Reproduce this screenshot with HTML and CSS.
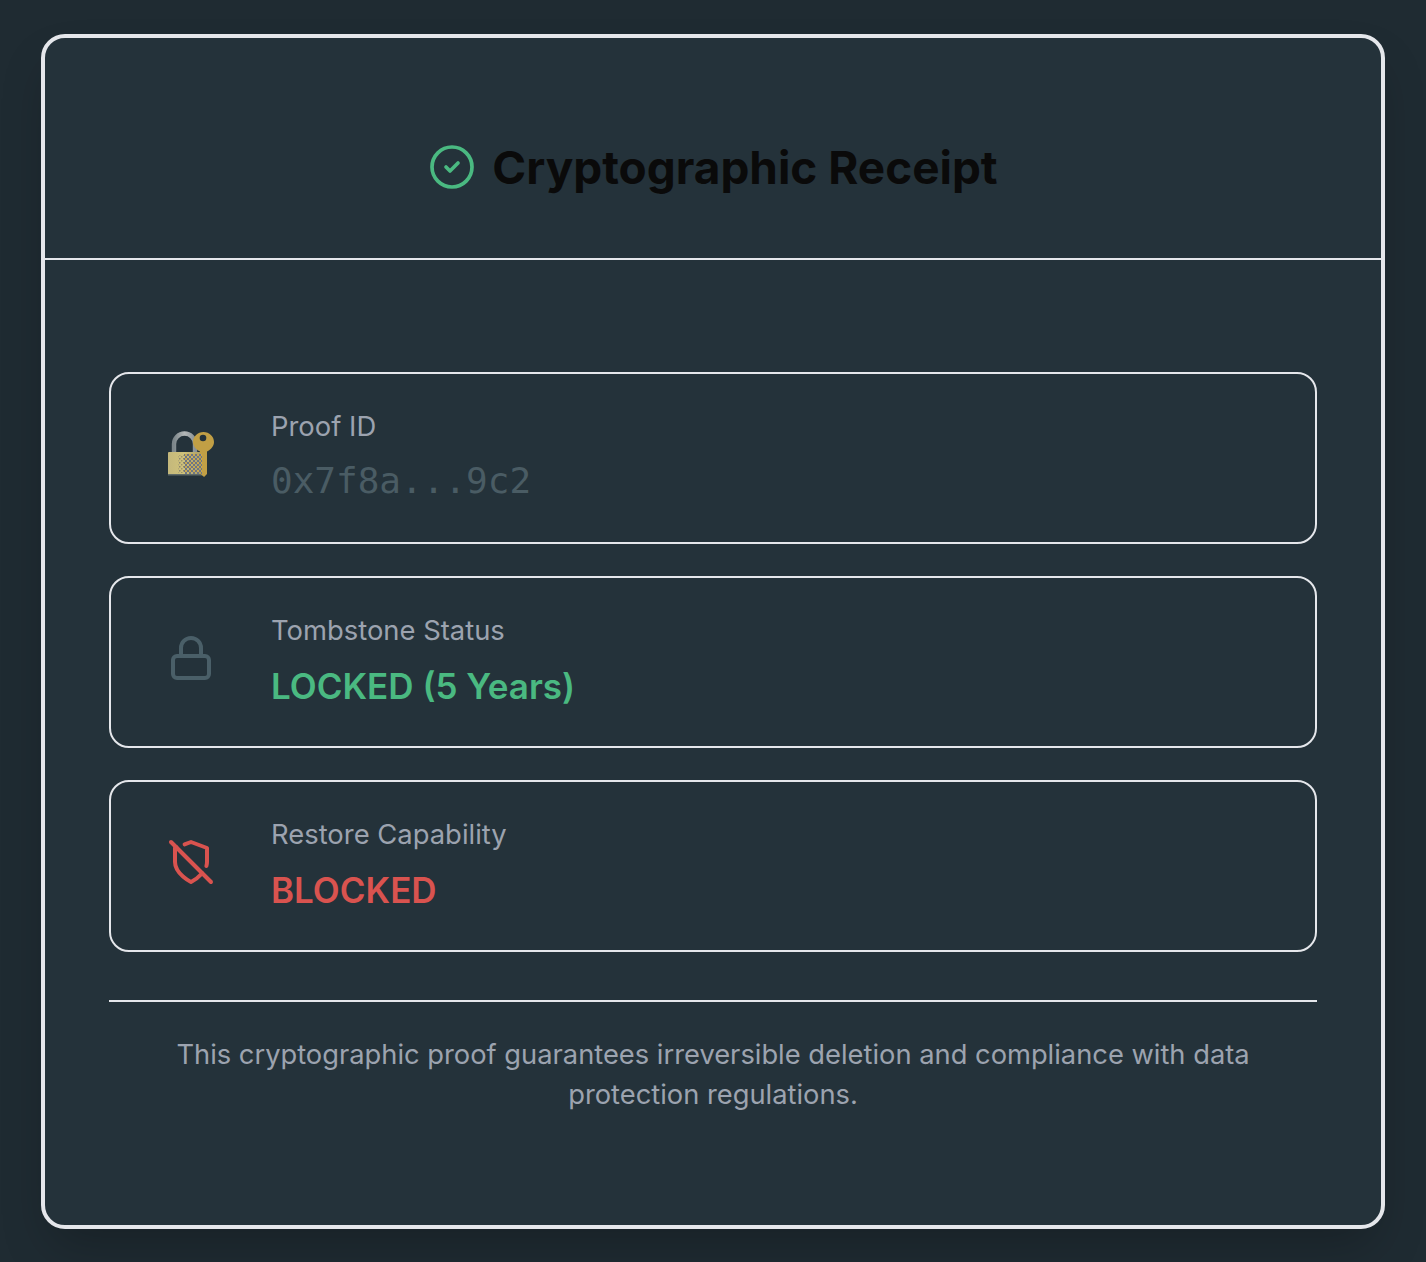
FILE: index.html
```html
<!DOCTYPE html>
<html lang="en">
<head>
    <meta charset="UTF-8">
    <meta name="viewport" content="width=device-width, initial-scale=1.0">
    <title>Cryptographic Receipt</title>
    <link rel="stylesheet" href="styles.css">
</head>
<body>
    <div class="card">
        <div class="card-header">
            <svg class="check-icon" viewBox="0 0 24 24" fill="none" stroke="#4ab981" stroke-width="1.85" stroke-linecap="round" stroke-linejoin="round">
                <circle cx="12" cy="12" r="10"/>
                <path d="m9 12 2 2 4-4"/>
            </svg>
            <h1>Cryptographic Receipt</h1>
        </div>
        <div class="card-body">
            <div class="rows">
                <div class="row">
                    <div class="row-icon">
                        <svg class="emoji" viewBox="0 0 48 48">
                            <defs>
                                <linearGradient id="brass" x1="0" x2="1" y1="0" y2="0">
                                    <stop offset="0" stop-color="#c4b87c"/>
                                    <stop offset="0.45" stop-color="#cfc27a"/>
                                    <stop offset="1" stop-color="#a89a62"/>
                                </linearGradient>
                                <linearGradient id="steel" x1="0" x2="1" y1="0" y2="0">
                                    <stop offset="0" stop-color="#7c868a"/>
                                    <stop offset="0.5" stop-color="#b4b8b8"/>
                                    <stop offset="1" stop-color="#8a9296"/>
                                </linearGradient>
                                <pattern id="dither" width="4" height="4" patternUnits="userSpaceOnUse">
                                    <rect width="2" height="2" fill="#6f7684"/>
                                    <rect x="2" y="2" width="2" height="2" fill="#6f7684"/>
                                    <rect x="2" width="2" height="2" fill="#c9a94f"/>
                                </pattern>
                                <pattern id="sparse" width="4" height="4" patternUnits="userSpaceOnUse">
                                    <rect width="1.5" height="1.5" fill="#8b8672"/>
                                    <rect x="2" y="2" width="1.5" height="1.5" fill="#9a9270"/>
                                </pattern>
                            </defs>
                            <path d="M7 23v-9a10.500 10.500 0 0 1 21 0v9" fill="none" stroke="url(#steel)" stroke-width="4.400"/>
                            <rect x="1" y="22" width="35" height="23" rx="1" fill="url(#brass)"/>
                            <rect x="1" y="44" width="35" height="1.500" fill="#5e6a68"/>
                            <path d="M36.500 2C42.300 2 47 6.500 47 12c0 4-3 7.500-7 9.500V44l-3 3-1-1-3-2.500V21.500c-4-2-7-5.500-7-9.500 0-5.500 4.700-10 10.500-10z" fill="#c19f45"/>
                            <circle cx="36" cy="8" r="3.300" fill="#24323a"/>
                            <rect x="11" y="25" width="6" height="18" fill="url(#sparse)"/>
                            <rect x="17" y="24" width="18" height="20" fill="url(#dither)"/>
                        </svg>
                    </div>
                    <div class="row-text">
                        <div class="row-label">Proof ID</div>
                        <div class="row-value mono">0x7f8a...9c2</div>
                    </div>
                </div>
                <div class="row">
                    <div class="row-icon">
                        <svg class="line-icon" viewBox="0 0 24 24" fill="none" stroke="#4a5f68" stroke-width="2" stroke-linecap="round" stroke-linejoin="round">
                            <rect x="3" y="11" width="18" height="11" rx="2" ry="2"/>
                            <path d="M7 11V7a5 5 0 0 1 10 0v4"/>
                        </svg>
                    </div>
                    <div class="row-text">
                        <div class="row-label">Tombstone Status</div>
                        <div class="row-value green">LOCKED (5 Years)</div>
                    </div>
                </div>
                <div class="row">
                    <div class="row-icon">
                        <svg class="line-icon" viewBox="0 0 24 24" fill="none" stroke="#d9534f" stroke-width="2" stroke-linecap="round" stroke-linejoin="round">
                            <path d="M19.700 14a6.900 6.900 0 0 0 .3-2V5l-8-3-3.200 1.200"/>
                            <path d="m2 2 20 20"/>
                            <path d="M4.700 4.700 4 5v7c0 6 8 10 8 10a20.300 20.300 0 0 0 5.620-4.380"/>
                        </svg>
                    </div>
                    <div class="row-text">
                        <div class="row-label">Restore Capability</div>
                        <div class="row-value red">BLOCKED</div>
                    </div>
                </div>
            </div>
            <p class="note">This cryptographic proof guarantees irreversible deletion and compliance with data protection regulations.</p>
        </div>
    </div>
</body>
</html>
```

FILE: styles.css
```css
* {
    box-sizing: border-box;
}

body {
    margin: 0;
    padding: 34px 41px 33px;
    background: #1f2b32;
    font-family: Inter, "Liberation Sans", sans-serif;
}

.card {
    height: 1195px;
    background: #24323a;
    border: 4px solid #e5e7eb;
    border-radius: 24px;
    box-shadow: 0 25px 50px -12px rgba(0, 0, 0, 0.25);
}

.card-header {
    height: 222px;
    padding-top: 38px;
    display: flex;
    align-items: center;
    justify-content: center;
    gap: 16px;
    border-bottom: 2px solid #e5e7eb;
}

.check-icon {
    width: 48px;
    height: 48px;
}

.card-header h1 {
    margin: 0;
    font-size: 45.9px;
    font-weight: 700;
    color: #0a0a0a;
}

.card-body {
    padding: 112px 64px 0;
}

.rows {
    display: flex;
    flex-direction: column;
    gap: 32px;
    padding-bottom: 48px;
    border-bottom: 2px solid #e5e7eb;
}

.row {
    height: 172px;
    display: flex;
    align-items: flex-start;
    padding: 32px 56px;
    gap: 56px;
    border: 2px solid #e5e7eb;
    border-radius: 20px;
}

.row-icon {
    flex: none;
    width: 48px;
    height: 48px;
    margin-top: 24px;
}

.emoji, .line-icon {
    display: block;
    width: 48px;
    height: 48px;
}

.row-label {
    font-size: 27.4px;
    line-height: 40px;
    color: #9ca3af;
}

.row-value {
    margin-top: 12px;
    font-size: 35px;
    line-height: 48px;
    font-weight: 600;
}

.row-value.mono {
    margin-top: 11px;
    font-size: 36px;
    font-family: "DejaVu Sans Mono", monospace;
    font-weight: 400;
    color: #4a5c64;
}

.green {
    color: #4ab981;
}

.red {
    color: #d9534f;
}

.note {
    margin: 33px 0 0;
    text-align: center;
    font-size: 27.3px;
    line-height: 40px;
    color: #9ca3af;
}
```
